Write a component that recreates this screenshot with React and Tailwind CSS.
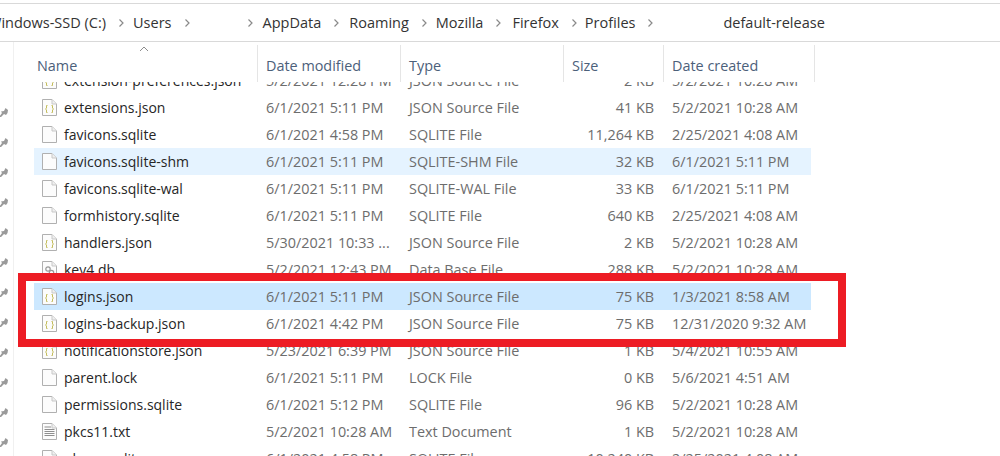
import React from "react";

const crumbs = [
  { label: "Windows-SSD (C:)", gap: "ml-[-12px]" },
  { label: "Users", gap: "ml-[8px]" },
  { label: "", gap: "ml-[56px]" },
  { label: "AppData", gap: "ml-[9px]" },
  { label: "Roaming", gap: "ml-[9px]" },
  { label: "Mozilla", gap: "ml-[8px]" },
  { label: "Firefox", gap: "ml-[10px]" },
  { label: "Profiles", gap: "ml-[7px]" },
];

const json = "JSON Source File";
const sqlite = "SQLITE File";

const files = [
  ["extension-preferences.json", "5/2/2021 12:28 PM", json, "2 KB", "5/2/2021 10:28 AM", "json"],
  ["extensions.json", "6/1/2021 5:11 PM", json, "41 KB", "5/2/2021 10:28 AM", "json"],
  ["favicons.sqlite", "6/1/2021 4:58 PM", sqlite, "11,264 KB", "2/25/2021 4:08 AM", "blank"],
  ["favicons.sqlite-shm", "6/1/2021 5:11 PM", "SQLITE-SHM File", "32 KB", "6/1/2021 5:11 PM", "blank", "bg-[#e5f3ff]"],
  ["favicons.sqlite-wal", "6/1/2021 5:11 PM", "SQLITE-WAL File", "33 KB", "6/1/2021 5:11 PM", "blank"],
  ["formhistory.sqlite", "6/1/2021 5:11 PM", sqlite, "640 KB", "2/25/2021 4:08 AM", "blank"],
  ["handlers.json", "5/30/2021 10:33 ...", json, "2 KB", "5/2/2021 10:28 AM", "json"],
  ["key4.db", "5/2/2021 12:43 PM", "Data Base File", "288 KB", "5/2/2021 10:28 AM", "db"],
  ["logins.json", "6/1/2021 5:11 PM", json, "75 KB", "1/3/2021 8:58 AM", "json", "bg-[#cce8ff]"],
  ["logins-backup.json", "6/1/2021 4:42 PM", json, "75 KB", "12/31/2020 9:32 AM", "json"],
  ["notificationstore.json", "5/23/2021 6:39 PM", json, "1 KB", "5/4/2021 10:55 AM", "json"],
  ["parent.lock", "6/1/2021 5:11 PM", "LOCK File", "0 KB", "5/6/2021 4:51 AM", "blank"],
  ["permissions.sqlite", "6/1/2021 5:12 PM", sqlite, "96 KB", "5/2/2021 10:28 AM", "blank"],
  ["pkcs11.txt", "5/2/2021 10:28 AM", "Text Document", "1 KB", "5/2/2021 10:28 AM", "txt"],
  ["places.sqlite", "6/1/2021 4:58 PM", sqlite, "10,240 KB", "2/25/2021 4:08 AM", "blank"],
];

const Chevron = () => (
  <svg width="7" height="10" viewBox="0 0 7 10" className="shrink-0">
    <path d="M1.5 1.5 L5 5 L1.5 8.5" fill="none" stroke="#8a8a8a" strokeWidth="1.2" />
  </svg>
);

const Pin = () => (
  <svg width="8" height="12" viewBox="0 0 8 12" className="shrink-0">
    <path d="M-1 10 L2 6 L1 4.5 L4 4 L5.5 1 L8 3 L7.5 6 L6 8 L4 7 L1 10 Z" fill="#9a9a9a" />
  </svg>
);

const FileIcon = ({ type }) => (
  <svg width="15" height="17" viewBox="0 0 15 17" className="shrink-0">
    <path d="M0.5 0.5 H10 L14.5 5 V16.5 H0.5 Z" fill="#fcfcfc" stroke="#b0b0b0" />
    <path d="M10 0.5 V5 H14.5" fill="#f0f0f0" stroke="#c8c8c8" />
    {type === "json" && (
      <g fill="none" stroke="#c4bd5c" strokeWidth="1">
        <path d="M5.5 6.5 H4.5 V9 L3.5 10 L4.5 11 V13.5 H5.5" />
        <path d="M9.5 6.5 H10.5 V9 L11.5 10 L10.5 11 V13.5 H9.5" />
      </g>
    )}
    {type === "txt" && (
      <g stroke="#8f8f8f" strokeWidth="1">
        <path d="M2.5 4 H9" />
        <path d="M2.5 6.5 H12.5" />
        <path d="M2.5 8.5 H12.5" />
        <path d="M2.5 10.5 H12.5" />
        <path d="M2.5 12.5 H12.5" />
      </g>
    )}
    {type === "db" && (
      <g fill="none" stroke="#9a9a9a" strokeWidth="1.2">
        <circle cx="6" cy="8" r="2.2" />
        <circle cx="9.5" cy="11.5" r="2.2" />
      </g>
    )}
  </svg>
);

const HeaderCell = ({ width, children }) => (
  <div className={`${width} h-[37px] border-r border-[#e5e5e5] flex items-end pb-[6px] pl-2 text-[#4c607a]`}>
    {children}
  </div>
);

export default function App() {
  return (
    <div
      className="relative w-[1000px] h-[456px] overflow-hidden bg-white text-[14.4px] leading-[20px]"
      style={{ fontFamily: '"Open Sans", sans-serif' }}
    >
      {/* Address bar */}
      <div className="mt-[3px] h-[39px] border-y border-[#d9d9d9] flex items-center text-[#333] text-[14.5px] whitespace-nowrap">
        {crumbs.map((c) => (
          <div key={c.label || "hidden"} className={`flex items-center gap-[12px] ${c.gap}`}>
            {c.label && <span>{c.label}</span>}
            <Chevron />
          </div>
        ))}
        <span className="ml-[69px]">default-release</span>
      </div>

      <div className="flex h-[414px]">
        {/* Pinned items in the nav pane */}
        <div className="w-[14px] shrink-0 border-r border-[#f0f0f0] flex flex-col gap-[18px] pt-[65px] overflow-hidden">
          {Array.from({ length: 12 }).map((_, i) => (
            <Pin key={i} />
          ))}
        </div>

        <div className="flex-1 min-w-0 pl-[20px]">
          {/* Column headers */}
          <div className="relative flex h-[40px] pt-[3px]">
            <span className="absolute left-[105px] top-[4px]">
              <svg width="10" height="6" viewBox="0 0 10 6">
                <path d="M1 5 L5 1 L9 5" fill="none" stroke="#8d8d8d" />
              </svg>
            </span>
            <HeaderCell width="w-[224px]">
              <span className="-ml-[5px]">Name</span>
            </HeaderCell>
            <HeaderCell width="w-[143px]">Date modified</HeaderCell>
            <HeaderCell width="w-[163px]">Type</HeaderCell>
            <HeaderCell width="w-[100px]">Size</HeaderCell>
            <HeaderCell width="w-[151px]">Date created</HeaderCell>
          </div>

          {/* File rows */}
          <div className="h-[374px] overflow-hidden">
            <div className="-mt-[15px] w-[777px]">
              {files.map((f) => (
                <div key={f[0]} className={`flex items-center h-[27px] text-[#6d6d6d] whitespace-nowrap ${f[6] || ""}`}>
                  <div className="w-[232px] flex items-center gap-[7px] pl-[8px] text-[14px] text-[#262626]">
                    <FileIcon type={f[5]} />
                    <span>{f[0]}</span>
                  </div>
                  <div className="w-[143px]">{f[1]}</div>
                  <div className="w-[163px]">{f[2]}</div>
                  <div className="w-[82px] text-right">{f[3]}</div>
                  <div className="ml-[18px]">{f[4]}</div>
                </div>
              ))}
            </div>
          </div>
        </div>
      </div>

      {/* Red annotation box */}
      <div className="absolute left-[18px] top-[273px] w-[828px] h-[74px] border-[8px] border-[#ed1c24]" />
    </div>
  );
}
